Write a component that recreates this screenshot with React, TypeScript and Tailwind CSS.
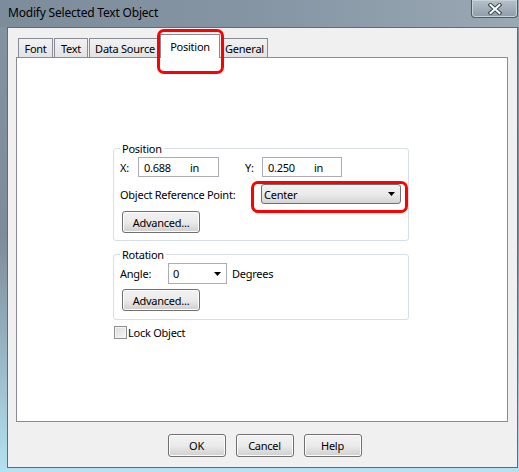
import React from "react";

const font = { fontFamily: '"Noto Sans", "Open Sans", sans-serif' };

function Btn({ label, w, className = "" }: { label: string; w: string; className?: string }) {
  return (
    <div
      className={`${w} h-[22px] rounded-[3px] border border-[#707070] bg-gradient-to-b from-[#f2f2f2] via-[#ebebeb] to-[#cfcfcf] shadow-[inset_0_0_0_1px_#fcfcfc] flex items-center justify-center text-[11px] leading-[15px] tracking-[-0.25px] text-black ${className}`}
    >
      {label}
    </div>
  );
}

function Arrow() {
  return (
    <svg width="7" height="4" viewBox="0 0 7 4">
      <path d="M0 0 H7 L3.5 4 Z" fill="#000" />
    </svg>
  );
}

const tabCls =
  "h-[19px] border border-b-0 border-[#898c95] bg-gradient-to-b from-[#f2f2f2] to-[#e3e3e3] flex items-center justify-center whitespace-nowrap";

export default function App() {
  return (
    <div
      style={font}
      className="relative w-[519px] h-[472px] overflow-hidden flex flex-col bg-gradient-to-b from-[#8393a1] via-[#7e8b9a] to-[#b3e2f2] text-black text-[11px] leading-[15px] tracking-[-0.25px]"
    >
      {/* Title bar */}
      <div className="h-[27px] flex items-start bg-gradient-to-r from-[#7c8c9a] via-[#8595a3] to-[#9aa8b4]">
        <div className="pl-[8px] pt-[5px] text-[12px] leading-[15px] tracking-[-0.2px] text-black">
          Modify Selected Text Object
        </div>
        <div className="ml-auto mr-[1px] w-[47px] h-[18px] rounded-b-[4px] border border-t-0 border-[#4d5a66] bg-gradient-to-b from-[#b6c1ca] to-[#8e9ca8] shadow-[inset_0_0_0_1px_#c9d2d9] flex items-center justify-center">
          <svg width="14" height="12" viewBox="0 0 14 12">
            <path d="M2.5 2 L11.5 10 M11.5 2 L2.5 10" stroke="#3a4450" strokeWidth="4" strokeLinecap="square" />
            <path d="M2.5 2 L11.5 10 M11.5 2 L2.5 10" stroke="#ffffff" strokeWidth="2" strokeLinecap="square" />
          </svg>
        </div>
      </div>

      {/* Client area */}
      <div className="ml-[7px] w-[511px] h-[441px] border border-[#5f6b77] bg-[#f0f0f0] flex flex-col">
        <div className="pl-[8px] pt-[6px]">
          {/* Tabs */}
          <div className="flex items-end h-[23px] w-[492px]">
            <div className={`ml-[2px] w-[35px] ${tabCls}`}>Font</div>
            <div className={`ml-[1px] w-[34px] ${tabCls}`}>Text</div>
            <div className={`ml-[1px] w-[72px] ${tabCls}`}>Data Source</div>
            <div className="relative z-10 -ml-[1px] -mb-px w-[60px] h-[24px] border border-b-0 border-[#898c95] bg-white flex items-start justify-center pt-[4px]">
              Position
            </div>
            <div className={`ml-[1px] w-[47px] ${tabCls}`}>General</div>
          </div>

          {/* Panel */}
          <div className="w-[492px] h-[365px] border border-[#898c95] bg-white pl-[96px] pt-[83px]">
            <fieldset className="w-[296px] border border-[#d5dfe5] rounded-[3px] px-[6px] pb-[7px]">
              <legend className="px-[2px]">Position</legend>
              <div className="mt-[1px] flex items-center h-[20px]">
                <span className="w-[18px]">X:</span>
                <div className="w-[81px] h-[20px] border border-[#abadb3] bg-white flex items-center pl-[5px]">
                  <span className="w-[46px]">0.688</span>
                  <span>in</span>
                </div>
                <span className="ml-[26px] w-[17px]">Y:</span>
                <div className="w-[80px] h-[20px] border border-[#abadb3] bg-white flex items-center pl-[5px]">
                  <span className="w-[46px]">0.250</span>
                  <span>in</span>
                </div>
              </div>
              <div className="mt-[7px] flex items-center h-[20px]">
                <span className="w-[141px] whitespace-nowrap">Object Reference Point:</span>
                <div className="w-[140px] h-[20px] rounded-[3px] border border-[#707070] bg-gradient-to-b from-[#f2f2f2] via-[#ebebeb] to-[#d4d4d4] flex items-center pl-[2px] pr-[5px]">
                  <span className="flex-1">Center</span>
                  <Arrow />
                </div>
              </div>
              <Btn label="Advanced..." w="w-[78px]" className="mt-[7px] ml-[2px]" />
            </fieldset>

            <fieldset className="mt-[6px] w-[296px] border border-[#d5dfe5] rounded-[3px] px-[6px] pb-[8px]">
              <legend className="px-[2px]">Rotation</legend>
              <div className="mt-[1px] flex items-center h-[21px]">
                <span className="w-[48px]">Angle:</span>
                <div className="w-[59px] h-[21px] border border-[#abadb3] bg-white flex items-center pl-[4px] pr-[5px]">
                  <span className="flex-1">0</span>
                  <Arrow />
                </div>
                <span className="ml-[5px]">Degrees</span>
              </div>
              <Btn label="Advanced..." w="w-[78px]" className="mt-[5px] ml-[2px]" />
            </fieldset>

            <div className="mt-[5px] ml-[1px] flex items-center h-[14px]">
              <div className="w-[13px] h-[13px] border border-[#8e8f8f] bg-gradient-to-br from-[#dcdcdc] to-[#f7f7f7] shadow-[inset_0_0_0_1px_#f4f4f4]" />
              <span className="ml-[1px]">Lock Object</span>
            </div>
          </div>
        </div>

        {/* Buttons */}
        <div className="mt-[12px] pl-[4px] flex justify-center gap-[10px]">
          <Btn label="OK" w="w-[58px]" className="h-[23px]" />
          <Btn label="Cancel" w="w-[58px]" className="h-[23px]" />
          <Btn label="Help" w="w-[58px]" className="h-[23px]" />
        </div>
      </div>

      {/* Red highlight annotations */}
      <div className="absolute left-[157px] top-[29px] w-[67px] h-[45px] border-[3px] border-[#f00] rounded-[7px] z-20" />
      <div className="absolute left-[251px] top-[181px] w-[157px] h-[32px] border-[3px] border-[#f00] rounded-[7px] z-20" />
    </div>
  );
}
